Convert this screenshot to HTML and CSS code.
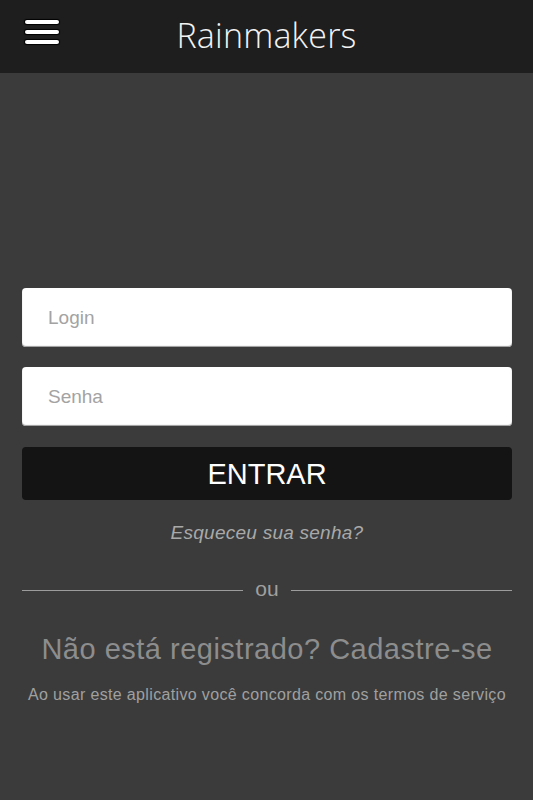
FILE: index.html
```html
<!DOCTYPE html>
<html>
  <head>
    <meta charset="utf-8" />
    <title>Rainmakers</title>
    <meta name="viewport" content="width=device-width, initial-scale=1.0" />
    <link rel="stylesheet" href="styles.css">
  </head>
  <body>
    <div class="topbar">
      <button class="menu" aria-label="Menu">
        <span></span>
        <span></span>
        <span></span>
      </button>
      <h1>Rainmakers</h1>
    </div>

    <div class="content">
      <form class="login" onsubmit="return false">
        <input class="field" type="text" placeholder="Login" />
        <input class="field" type="password" placeholder="Senha" />
        <button class="enter" type="submit">ENTRAR</button>
      </form>

      <a class="forgot" href="#">Esqueceu sua senha?</a>

      <div class="divider">
        <span class="line"></span>
        <span class="or">ou</span>
        <span class="line"></span>
      </div>

      <a class="signup" href="#">Não está registrado? Cadastre-se</a>
      <p class="terms">Ao usar este aplicativo você concorda com os termos de serviço</p>
    </div>
  </body>
</html>
```

FILE: styles.css
```css
html, body {
  margin: 0;
  background-color: #3b3b3b;
  font-family: "Liberation Sans", Arial, sans-serif;
}

.topbar {
  position: relative;
  height: 73px;
  background-color: #1e1e1e;
  display: flex;
  align-items: center;
  justify-content: center;
}

.topbar h1 {
  margin: 0 0 4px 0;
  font-family: "Open Sans", sans-serif;
  font-weight: 300;
  font-size: 34px;
  color: #f2f2f2;
  letter-spacing: 0.2px;
}

.menu {
  position: absolute;
  left: 25px;
  top: 20px;
  width: 34px;
  padding: 0;
  border: 0;
  background: none;
  display: flex;
  flex-direction: column;
  gap: 6px;
}

.menu span {
  display: block;
  height: 4px;
  border-radius: 2px;
  background-color: #ffffff;
  box-shadow: 0 0 1px 1px #000;
}

.content {
  padding: 215px 21px 0 22px;
  display: flex;
  flex-direction: column;
  align-items: center;
}

.login {
  width: 100%;
  display: flex;
  flex-direction: column;
}

.field {
  box-sizing: border-box;
  height: 59px;
  margin-bottom: 20px;
  padding: 0 26px;
  border: 0;
  border-radius: 4px;
  box-shadow: inset 0 -1px 1px #9a9a9a;
  background-color: #ffffff;
  font-family: "Liberation Sans", Arial, sans-serif;
  font-size: 19px;
  color: #333;
}

.field::placeholder {
  color: #a3a3a3;
}

.enter {
  height: 53px;
  margin-top: 1px;
  border: 0;
  border-radius: 4px;
  background-color: #141414;
  color: #ffffff;
  font-family: "Liberation Sans", Arial, sans-serif;
  font-size: 29px;
  padding: 2px 0 0 0;
}

.forgot {
  margin-top: 22px;
  font-size: 19px;
  font-style: italic;
  letter-spacing: 0.25px;
  color: #a9a9a9;
  text-decoration: none;
}

.divider {
  width: 100%;
  margin-top: 33px;
  display: flex;
  align-items: center;
  gap: 12px;
}

.divider .line {
  flex: 1;
  height: 1px;
  background-color: #9c9c9c;
}

.divider .or {
  font-size: 21px;
  color: #a0a0a0;
  line-height: 24px;
  padding-bottom: 2px;
}

.signup {
  margin-top: 30px;
  font-size: 29px;
  letter-spacing: 0.5px;
  color: #8d8d8d;
  text-decoration: none;
}

.terms {
  margin: 20px 0 0 0;
  font-size: 16px;
  letter-spacing: 0.35px;
  color: #a0a0a0;
  white-space: nowrap;
}
```
